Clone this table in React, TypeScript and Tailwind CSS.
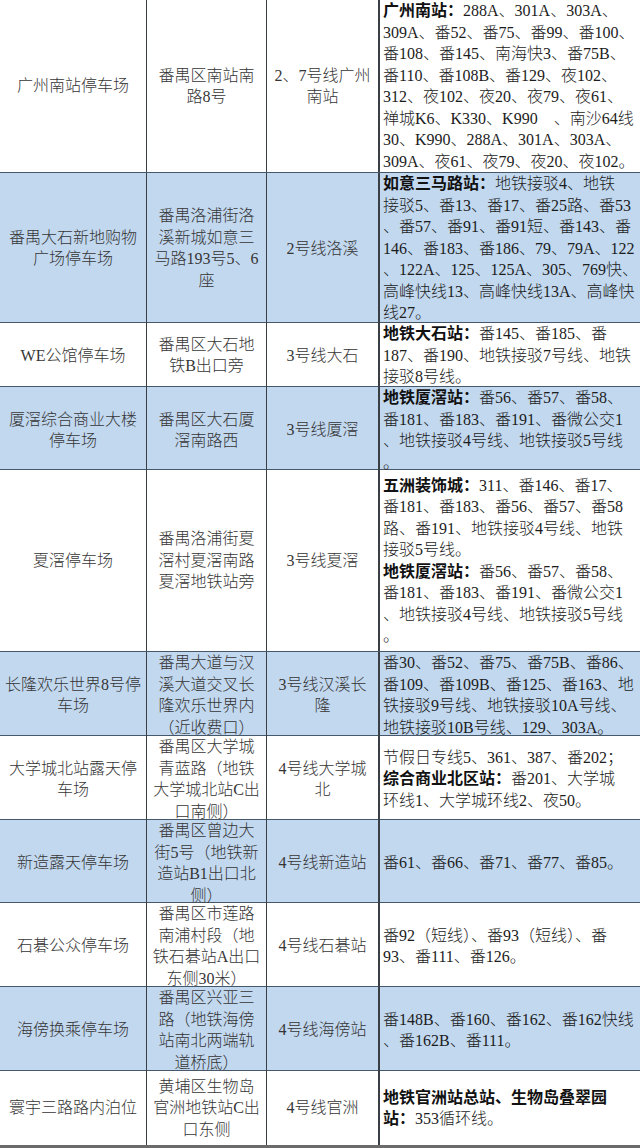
import React from 'react';

type Seg = string | { b: string };
type Line = Seg | Seg[];

interface Row {
  h: string;
  blue: boolean;
  name: string[];
  addr: string[];
  metro: string[];
  bus: Line[];
}

const rows: Row[] = [
  {
    h: 'h-[173px]',
    blue: false,
    name: ['广州南站停车场'],
    addr: ['番禺区南站南', '路8号'],
    metro: ['2、7号线广州', '南站'],
    bus: [
      [{ b: '广州南站：' }, '288A、301A、303A、'],
      '309A、番52、番75、番99、番100、',
      '番108、番145、南海快3、番75B、',
      '番110、番108B、番129、夜102、',
      '312、夜102、夜20、夜79、夜61、',
      '禅城K6、K330、K990　、南沙64线',
      '30、K990、288A、301A、303A、',
      '309A、夜61、夜79、夜20、夜102。',
    ],
  },
  {
    h: 'h-[150px]',
    blue: true,
    name: ['番禺大石新地购物', '广场停车场'],
    addr: ['番禺洛浦街洛', '溪新城如意三', '马路193号5、6', '座'],
    metro: ['2号线洛溪'],
    bus: [
      [{ b: '如意三马路站：' }, '地铁接驳4、地铁'],
      '接驳5、番13、番17、番25路、番53',
      '、番57、番91、番91短、番143、番',
      '146、番183、番186、79、79A、122',
      '、122A、125、125A、305、769快、',
      '高峰快线13、高峰快线13A、高峰快',
      '线27。',
    ],
  },
  {
    h: 'h-[64px]',
    blue: false,
    name: ['WE公馆停车场'],
    addr: ['番禺区大石地', '铁B出口旁'],
    metro: ['3号线大石'],
    bus: [
      [{ b: '地铁大石站：' }, '番145、番185、番'],
      '187、番190、地铁接驳7号线、地铁',
      '接驳8号线。',
    ],
  },
  {
    h: 'h-[83px]',
    blue: true,
    name: ['厦滘综合商业大楼', '停车场'],
    addr: ['番禺区大石厦', '滘南路西'],
    metro: ['3号线厦滘'],
    bus: [
      [{ b: '地铁厦滘站：' }, '番56、番57、番58、'],
      '番181、番183、番191、番微公交1',
      '、地铁接驳4号线、地铁接驳5号线',
      '。',
    ],
  },
  {
    h: 'h-[182px]',
    blue: false,
    name: ['夏滘停车场'],
    addr: ['番禺洛浦街夏', '滘村夏滘南路', '夏滘地铁站旁'],
    metro: ['3号线夏滘'],
    bus: [
      [{ b: '五洲装饰城：' }, '311、番146、番17、'],
      '番181、番183、番56、番57、番58',
      '路、番191、地铁接驳4号线、地铁',
      '接驳5号线。',
      [{ b: '地铁厦滘站：' }, '番56、番57、番58、'],
      '番181、番183、番191、番微公交1',
      '、地铁接驳4号线、地铁接驳5号线',
      '。',
    ],
  },
  {
    h: 'h-[84px]',
    blue: true,
    name: ['长隆欢乐世界8号停', '车场'],
    addr: ['番禺大道与汉', '溪大道交叉长', '隆欢乐世界内', '（近收费口）'],
    metro: ['3号线汉溪长', '隆'],
    bus: [
      '番30、番52、番75、番75B、番86、',
      '番109、番109B、番125、番163、地',
      '铁接驳9号线、地铁接驳10A号线、',
      '地铁接驳10B号线、129、303A。',
    ],
  },
  {
    h: 'h-[84px]',
    blue: false,
    name: ['大学城北站露天停', '车场'],
    addr: ['番禺区大学城', '青蓝路（地铁', '大学城北站C出', '口南侧）'],
    metro: ['4号线大学城', '北'],
    bus: [
      '节假日专线5、361、387、番202；',
      [{ b: '综合商业北区站：' }, '番201、大学城'],
      '环线1、大学城环线2、夜50。',
    ],
  },
  {
    h: 'h-[83px]',
    blue: true,
    name: ['新造露天停车场'],
    addr: ['番禺区曾边大', '街5号（地铁新', '造站B1出口北', '侧）'],
    metro: ['4号线新造站'],
    bus: ['番61、番66、番71、番77、番85。'],
  },
  {
    h: 'h-[84px]',
    blue: false,
    name: ['石碁公众停车场'],
    addr: ['番禺区市莲路', '南浦村段（地', '铁石碁站A出口', '东侧30米）'],
    metro: ['4号线石碁站'],
    bus: ['番92（短线）、番93（短线）、番', '93、番111、番126。'],
  },
  {
    h: 'h-[84px]',
    blue: true,
    name: ['海傍换乘停车场'],
    addr: ['番禺区兴亚三', '路（地铁海傍', '站南北两端轨', '道桥底）'],
    metro: ['4号线海傍站'],
    bus: ['番148B、番160、番162、番162快线', '、番162B、番111。'],
  },
  {
    h: 'h-[77px]',
    blue: false,
    name: ['寰宇三路路内泊位'],
    addr: ['黄埔区生物岛', '官洲地铁站C出', '口东侧'],
    metro: ['4号线官洲'],
    bus: [[{ b: '地铁官洲站总站、生物岛叠翠园' }], [{ b: '站：' }, '353循环线。']],
  },
];

const renderSeg = (s: Seg, i: number) =>
  typeof s === 'string' ? (
    <span key={i}>{s}</span>
  ) : (
    <span key={i} className="font-bold text-[#111]">
      {s.b}
    </span>
  );

const CenterCell: React.FC<{ lines: string[] }> = ({ lines }) => (
  <div className="flex flex-col items-center justify-center border-r border-[#3a3f46] text-[#353535] text-center">
    {lines.map((l, i) => (
      <div key={i} className="whitespace-nowrap">
        {l}
      </div>
    ))}
  </div>
);

const App: React.FC = () => {
  return (
    <div
      className="w-[640px] h-[1148px] overflow-hidden bg-white text-[16px] leading-[21.5px] font-light"
      style={{ fontFamily: '"Liberation Serif", "Noto Sans CJK SC", serif' }}
    >
      {rows.map((r, idx) => (
        <div
          key={idx}
          className={`grid grid-cols-[147px_120px_112px_261px] ${r.h} ${
            r.blue ? 'bg-[#c2d8ef]' : 'bg-white'
          } ${idx === rows.length - 1 ? 'border-b-[3px] border-[#6b6b6b]' : 'border-b border-[#46586c]'}`}
        >
          <CenterCell lines={r.name} />
          <CenterCell lines={r.addr} />
          <CenterCell lines={r.metro} />
          <div className="flex flex-col justify-center border-l border-[#3a3f46] pl-[3px] text-[#1c1c1c]">
            {r.bus.map((line, i) => (
              <div key={i} className="whitespace-nowrap">
                {Array.isArray(line) ? line.map(renderSeg) : renderSeg(line, 0)}
              </div>
            ))}
          </div>
        </div>
      ))}
    </div>
  );
};

export default App;
